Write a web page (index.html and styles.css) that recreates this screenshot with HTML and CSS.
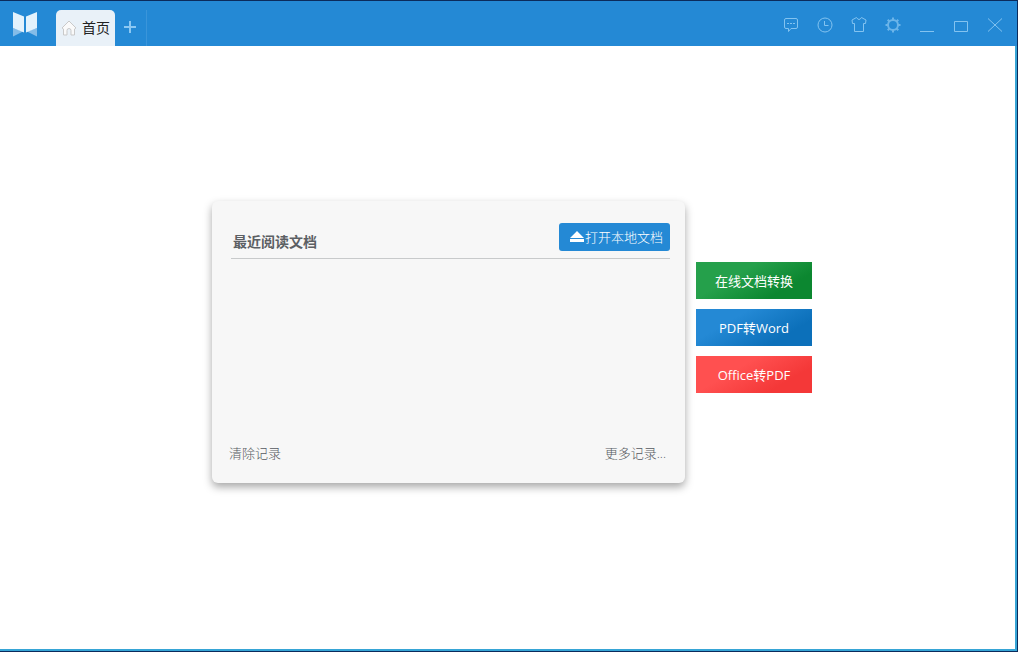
FILE: index.html
```
<!doctype html>
<html lang="zh-CN">
  <head>
    <meta charset="utf-8">
    <title>首页</title>
    <link rel="stylesheet" href="styles.css">
  </head>
  <body>
    <header class="titlebar">
      <svg class="logo" viewBox="0 0 26 26">
        <path class="logo-fold" d="M1 17 V25.500 L11 20.500z M25 17 V25.500 L15 20.500z"/>
        <path class="logo-page" d="M1 1 L12 5.500 V21.500 L1 17z M25 1 L14 5.500 V21.500 L25 17z"/>
      </svg>
      <nav class="tabs">
        <a class="tab" href="#">
          <svg class="home" viewBox="0 0 16 16"><path d="M1 8 L8 1 L15 8 L13.500 9 V15 H10 V10.500 Q10 8.500 8 8.500 Q6 8.500 6 10.500 V15 H2.500 V9z"/></svg>
          <span>首页</span>
        </a>
        <button class="new-tab" aria-label="新建标签">
          <svg viewBox="0 0 12 12"><path d="M6 0v12M0 6h12"/></svg>
        </button>
      </nav>
      <div class="tools">
        <button aria-label="反馈">
          <svg viewBox="0 0 16 16"><path d="M3 1.500h10q1.500 0 1.500 1.500v7q0 1.500-1.500 1.500H8L5.500 14.500V11.500H3q-1.500 0-1.500-1.500V3q0-1.500 1.500-1.500z"/><path d="M4 6.500h2M7 6.500h2M10 6.500h2"/></svg>
        </button>
        <button aria-label="历史">
          <svg viewBox="0 0 16 16"><circle cx="8" cy="8" r="7"/><path d="M7.500 4v4.500h4"/></svg>
        </button>
        <button aria-label="皮肤">
          <svg viewBox="0 0 16 16"><path d="M5.500 .5 L1 3 L1.500 6.500 H3.500 V14.500 H12.500 V6.500 H14.500 L15 3 L10.500 .5 Q8 4.500 5.500 .5z"/></svg>
        </button>
        <button aria-label="设置">
          <svg viewBox="0 0 16 16"><circle class="gear" cx="8" cy="8" r="5"/><path class="gear" d="M8 .5v2.500M8 13v2.500M.5 8h2.500M13 8h2.500M2.700 2.700l1.800 1.800M11.500 11.500l1.800 1.800M13.300 2.700l-1.800 1.800M4.500 11.500l-1.800 1.800"/></svg>
        </button>
        <button aria-label="最小化">
          <svg viewBox="0 0 16 16"><path d="M1 14.500h14"/></svg>
        </button>
        <button aria-label="最大化">
          <svg viewBox="0 0 16 16"><path d="M1.500 4.500h13v10h-13z"/></svg>
        </button>
        <button aria-label="关闭">
          <svg viewBox="0 0 16 16"><path d="M1 1.500l14 13M15 1.500l-14 13"/></svg>
        </button>
      </div>
    </header>
    <main class="home-page">
      <section class="panel">
        <div class="panel-head">
          <h1>最近阅读文档</h1>
          <button class="open">
            <svg viewBox="0 0 14 12"><path d="M7 0 L14 7 H0z M0 8h14v3H0z"/></svg>
            <span>打开本地文档</span>
          </button>
        </div>
        <div class="panel-foot">
          <a href="#">清除记录</a>
          <a href="#">更多记录...</a>
        </div>
      </section>
      <div class="convert">
        <button class="green">在线文档转换</button>
        <button class="blue">PDF转Word</button>
        <button class="red">Office转PDF</button>
      </div>
    </main>
  </body>
</html>
```
FILE: styles.css
```
*,*:before,*:after {
  margin: 0;
  padding: 0;
  box-sizing: border-box;
}

body {
  display: flex;
  flex-direction: column;
  min-height: 100vh;
  border: 1px solid #0b2b5c;
  border-left: 0;
  background-color: #fff;
  font-family: "Open Sans", "Noto Sans CJK SC", sans-serif;
  font-size: 13px;
  line-height: 20px;
}

a {
  color: inherit;
  text-decoration: none;
}

button {
  border: 0;
  background: none;
  color: inherit;
  font: inherit;
}

svg {
  display: block;
}

/* title bar */

.titlebar {
  display: flex;
  height: 45px;
  padding-right: 5px;
  background-color: #2489d5;
}

.logo {
  width: 26px;
  height: 26px;
  margin: 10px 18px 0 12px;
}

.logo-page {
  fill: #e3f2fc;
}

.logo-fold {
  fill: #84bce8;
}

.tabs {
  display: flex;
  align-items: flex-end;
}

.tab {
  display: flex;
  align-items: center;
  gap: 5px;
  height: 36px;
  padding: 0 5px;
  border-radius: 5px 5px 0 0;
  background-color: #e9f1f8;
  color: #222;
  font-size: 14px;
}

.home {
  width: 16px;
  height: 16px;
  fill: #fafafa;
  stroke: #c9c9c9;
}

.new-tab {
  height: 36px;
  padding: 0 10px 2px 9px;
  border-right: 1px solid #3a95da;
}

.new-tab svg {
  width: 12px;
  height: 12px;
  stroke: #8cc8f3;
  stroke-width: 2;
}

.tools {
  display: flex;
  margin-left: auto;
}

.tools button {
  width: 34px;
  padding: 2px 9px 0;
}

.tools svg {
  width: 16px;
  height: 16px;
  fill: none;
  stroke: #83c3f0;
}

.tools .gear {
  stroke-width: 2;
  stroke: #6bb4e9;
}

/* start page */

.home-page {
  flex: 1;
  display: flex;
  justify-content: center;
  align-items: center;
  gap: 11px;
  padding: 0 0 11px 9px;
  border: solid #36a5d6;
  border-width: 0 2px 2px 0;
}

.panel {
  display: flex;
  flex-direction: column;
  justify-content: space-between;
  width: 473px;
  min-height: 282px;
  padding: 22px 15px 20px 19px;
  border-radius: 6px;
  background-color: #f7f7f7;
  box-shadow: 0 4px 8px rgba(0, 0, 0, .35);
}

.panel-head {
  display: flex;
  justify-content: space-between;
  padding-bottom: 6px;
  border-bottom: 1px solid #c8cacb;
}

.panel-head h1 {
  padding: 9px 0 0 2px;
  color: #5c6064;
  font-size: 14px;
  line-height: 20px;
}

.open {
  display: flex;
  align-items: center;
  gap: 1px;
  height: 28px;
  padding: 0 7px 0 11px;
  border-radius: 3px;
  background-color: #2489d5;
  color: #fff;
  font-weight: 300;
}

.open svg {
  width: 14px;
  height: 12px;
  fill: #fff;
}

.panel-foot {
  display: flex;
  justify-content: space-between;
  padding-right: 4px;
  color: #555960;
  font-weight: 300;
}

.panel-foot a:first-child {
  margin-left: -2px;
}

.convert {
  display: flex;
  flex-direction: column;
  gap: 10px;
  padding-bottom: 29px;
}

.convert button {
  width: 116px;
  height: 37px;
  color: #fff;
}

.convert .green {
  background: linear-gradient(150deg, #25a04b 35%, #0c8730 75%);
}

.convert .blue {
  background: linear-gradient(150deg, #2489d5 30%, #0c70ba 75%);
}

.convert .red {
  background: linear-gradient(150deg, #ff5050 35%, #f43838 75%);
}
```
